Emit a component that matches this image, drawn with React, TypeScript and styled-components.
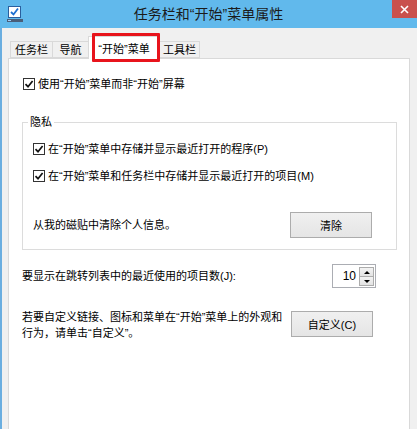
import React from 'react';
import styled, { createGlobalStyle } from 'styled-components';

const GlobalStyle = createGlobalStyle`
  html, body { margin: 0; padding: 0; background: #f0f0f0; }
  body { font-family: "Liberation Sans", "Noto Sans CJK SC", sans-serif; }
`;

const FONT = `"Liberation Sans", "Noto Sans CJK SC", sans-serif`;

const Window = styled.div`
  width: 417px;
  height: 429px;
  display: flex;
  flex-direction: column;
  overflow: hidden;
  font-family: ${FONT};
  font-size: 11px;
  color: #000;
`;

const TitleBar = styled.div`
  height: 28px;
  flex: none;
  background: #61b9ec;
  display: grid;
  grid-template-columns: 1fr auto 1fr;
  align-items: start;
`;

const TitleIcon = styled.div`
  padding: 6px 0 0 7px;
  display: flex;
`;

const TitleText = styled.div`
  line-height: 28px;
  font-size: 14px;
  color: #1b1b1b;
`;

const CloseButton = styled.div`
  justify-self: end;
  width: 25px;
  height: 18px;
  background: #c9514d;
  display: flex;
  align-items: center;
  justify-content: center;
`;

const Body = styled.div`
  flex: 1;
  display: flex;
  flex-direction: column;
  background: #f0f0f0;
  border-left: 2px solid #6aaee0;
  padding: 0 7px 0 6px;
  min-height: 0;
`;

const TabStrip = styled.div`
  height: 30px;
  flex: none;
  display: flex;
  align-items: flex-end;
  padding-left: 2px;
  position: relative;
  z-index: 1;
`;

const Tab = styled.div<{ $active?: boolean; $w: number }>`
  position: relative;
  box-sizing: border-box;
  width: ${(p) => p.$w}px;
  display: flex;
  align-items: center;
  justify-content: center;
  border: 1px solid #d9d9d9;
  border-bottom: ${(p) => (p.$active ? 'none' : '1px solid #d9d9d9')};
  background: ${(p) => (p.$active ? '#ffffff' : '#f0f0f0')};
  height: ${(p) => (p.$active ? '23px' : '17px')};
  margin-bottom: ${(p) => (p.$active ? '-1px' : '0')};
  margin-left: -1px;
  padding-top: ${(p) => (p.$active ? '2px' : '0')};
  z-index: ${(p) => (p.$active ? 2 : 1)};
  line-height: 14px;
  white-space: nowrap;
  &:first-child { margin-left: 0; }
`;

const Highlight = styled.div`
  position: absolute;
  top: -4px;
  left: 3px;
  right: -1px;
  bottom: -3px;
  border: 3px solid #e8141c;
  border-radius: 1px;
  pointer-events: none;
`;

const Panel = styled.div`
  flex: 1;
  background: #fff;
  border: 1px solid #d9d9d9;
  border-bottom: none;
  display: flex;
  flex-direction: column;
`;

const CheckRow = styled.label<{ $top?: number; $left?: number }>`
  display: flex;
  align-items: center;
  gap: 3px;
  height: 16px;
  margin-top: ${(p) => p.$top ?? 0}px;
  margin-left: ${(p) => p.$left ?? 0}px;
  white-space: nowrap;
`;

const Box = styled.span`
  box-sizing: border-box;
  width: 12px;
  height: 12px;
  border: 1px solid #333;
  background: #fff;
  display: flex;
  align-items: center;
  justify-content: center;
  flex: none;
`;

const Group = styled.fieldset`
  margin: 23px 12px 0 13px;
  padding: 0 24px 11px 10px;
  border: 1px solid #dcdcdc;
  min-inline-size: 0;
  display: flex;
  flex-direction: column;
`;

const Legend = styled.legend`
  line-height: 14px;
  padding: 0 2px;
  margin-left: -5px;
`;

const ActionRow = styled.div<{ $top: number; $align?: string }>`
  display: flex;
  justify-content: space-between;
  align-items: ${(p) => p.$align ?? 'center'};
  margin-top: ${(p) => p.$top}px;
`;

const PanelRow = styled(ActionRow)`
  padding: 0 36px 0 13px;
`;

const Text = styled.span`
  line-height: 16px;
`;

const WrapText = styled.div`
  width: 264px;
  line-height: 16px;
  margin-top: -2px;
`;

const PushButton = styled.div`
  box-sizing: border-box;
  width: 82px;
  height: 26px;
  border: 1px solid #acacac;
  background: linear-gradient(#f0f0f0, #e5e5e5);
  display: flex;
  align-items: center;
  justify-content: center;
  flex: none;
`;

const Spinner = styled.div`
  box-sizing: border-box;
  width: 44px;
  height: 24px;
  border: 1px solid #abadb3;
  background: #fff;
  display: flex;
  align-items: stretch;
  margin-right: -3px;
`;

const SpinValue = styled.div`
  flex: 1;
  text-align: right;
  padding-right: 3px;
  line-height: 22px;
  font-size: 12px;
`;

const SpinButtons = styled.div`
  display: flex;
  flex-direction: column;
  width: 15px;
  margin: 2px 1px 1px 0;
`;

const SpinButton = styled.div`
  flex: 1;
  box-sizing: border-box;
  border: 1px solid #acacac;
  background: linear-gradient(#f3f3f3, #e3e3e3);
  display: flex;
  align-items: center;
  justify-content: center;
  & + & { margin-top: -1px; }
`;

const Arrow = styled.span<{ $dir: 'up' | 'down' }>`
  width: 0;
  height: 0;
  border-left: 3px solid transparent;
  border-right: 3px solid transparent;
  ${(p) => (p.$dir === 'up' ? 'border-bottom: 3px solid #000;' : 'border-top: 3px solid #000;')}
`;

const Check = () => (
  <svg width="10" height="10" viewBox="0 0 10 10">
    <path d="M1.5 5.2 L4 7.7 L8.6 2" fill="none" stroke="#111" strokeWidth="1.7" />
  </svg>
);

const Checkbox: React.FC<{ top?: number; left?: number; children: React.ReactNode }> = ({ top, left, children }) => (
  <CheckRow $top={top} $left={left}>
    <Box>
      <Check />
    </Box>
    <Text>{children}</Text>
  </CheckRow>
);

const AppIcon = () => (
  <svg width="16" height="16" viewBox="0 0 16 16">
    <rect x="1.5" y="0.5" width="12" height="11" fill="#fff" stroke="#2a5f9e" />
    <path d="M4 6 L6.5 8.5 L11 2.5" fill="none" stroke="#1d6fd0" strokeWidth="1.8" />
    <rect x="0" y="13" width="16" height="3" fill="#4a5f7a" />
    <rect x="1" y="14" width="3" height="1" fill="#9fd0ff" />
  </svg>
);

export default function App() {
  return (
    <>
      <GlobalStyle />
      <Window>
        <TitleBar>
          <TitleIcon>
            <AppIcon />
          </TitleIcon>
          <TitleText>任务栏和“开始”菜单属性</TitleText>
          <CloseButton>
            <svg width="9" height="9" viewBox="0 0 9 9">
              <path d="M1 1 L8 8 M8 1 L1 8" stroke="#fff" strokeWidth="1.6" />
            </svg>
          </CloseButton>
        </TitleBar>
        <Body>
          <TabStrip>
            <Tab $w={43}>任务栏</Tab>
            <Tab $w={37}>导航</Tab>
            <Tab $w={72} $active>
              “开始”菜单
              <Highlight />
            </Tab>
            <Tab $w={41}>工具栏</Tab>
          </TabStrip>
          <Panel>
            <Checkbox top={17} left={14}>使用“开始”菜单而非“开始”屏幕</Checkbox>
            <Group>
              <Legend>隐私</Legend>
              <Checkbox top={12}>在“开始”菜单中存储并显示最近打开的程序(P)</Checkbox>
              <Checkbox top={11}>在“开始”菜单和任务栏中存储并显示最近打开的项目(M)</Checkbox>
              <ActionRow $top={28}>
                <Text>从我的磁贴中清除个人信息。</Text>
                <PushButton>清除</PushButton>
              </ActionRow>
            </Group>
            <PanelRow $top={14}>
              <Text>要显示在跳转列表中的最近使用的项目数(J):</Text>
              <Spinner>
                <SpinValue>10</SpinValue>
                <SpinButtons>
                  <SpinButton>
                    <Arrow $dir="up" />
                  </SpinButton>
                  <SpinButton>
                    <Arrow $dir="down" />
                  </SpinButton>
                </SpinButtons>
              </Spinner>
            </PanelRow>
            <PanelRow $top={23} $align="flex-start">
              <WrapText>若要自定义链接、图标和菜单在“开始”菜单上的外观和行为，请单击“自定义”。</WrapText>
              <PushButton>自定义(C)</PushButton>
            </PanelRow>
          </Panel>
        </Body>
      </Window>
    </>
  );
}
